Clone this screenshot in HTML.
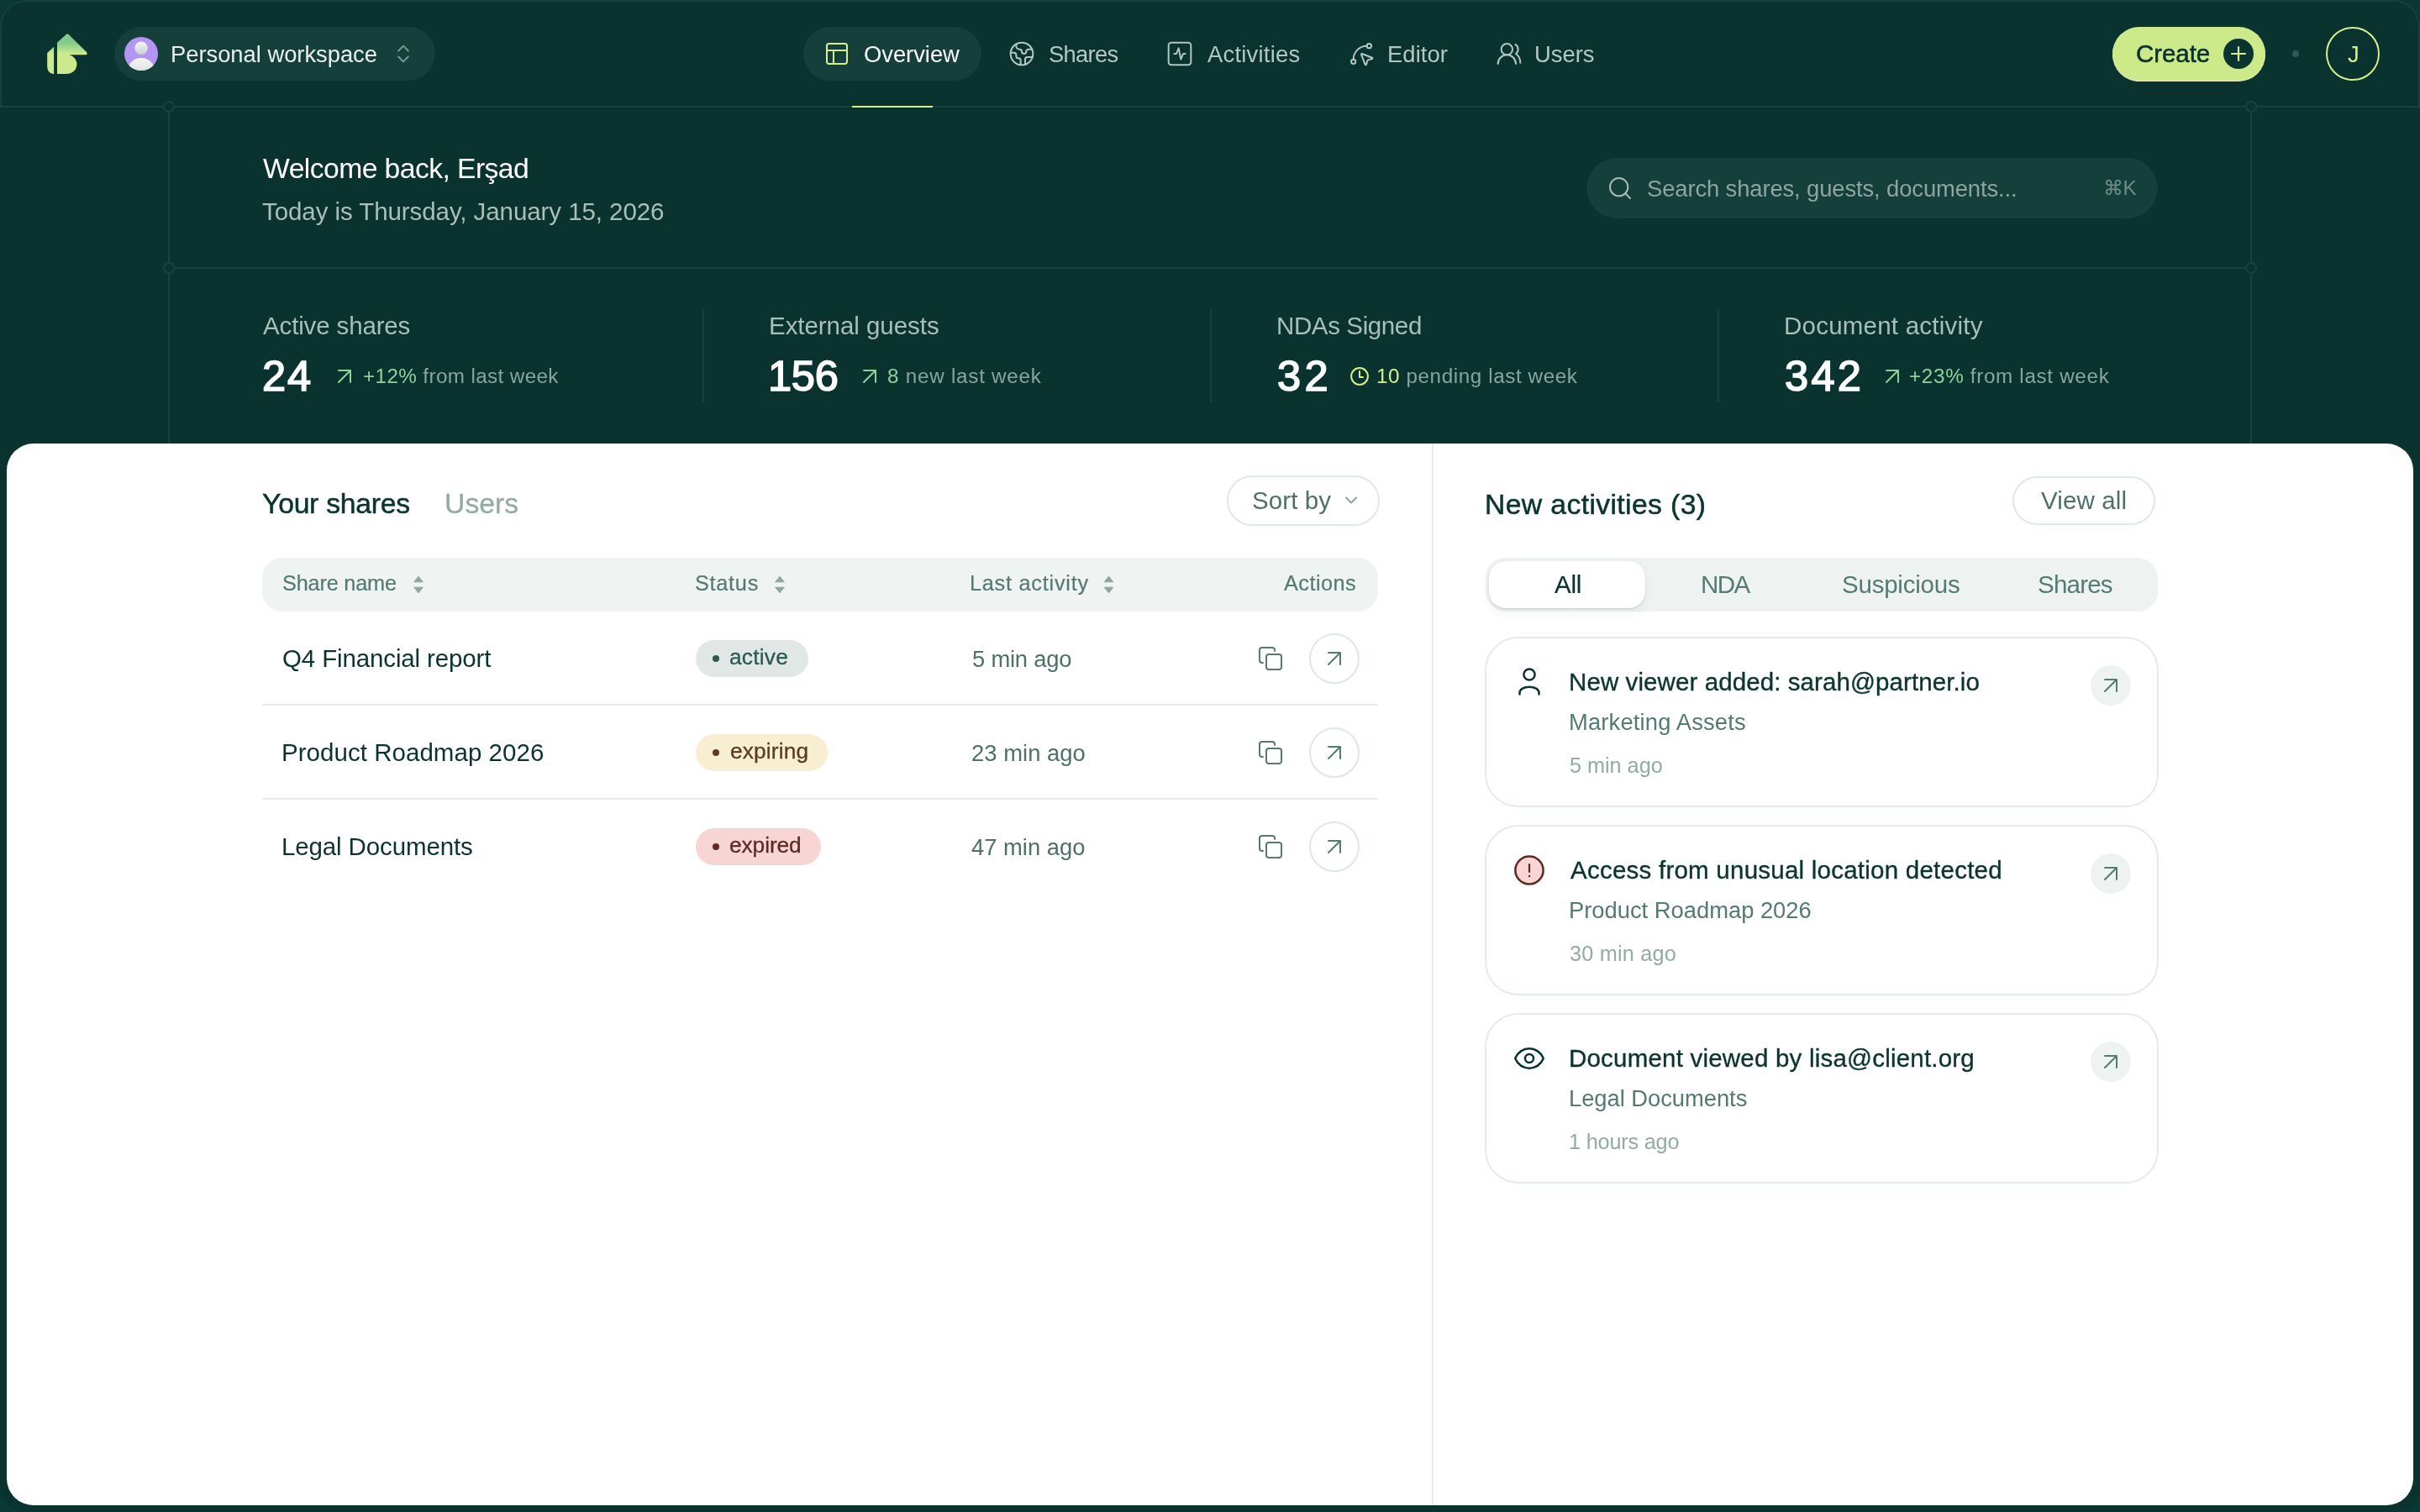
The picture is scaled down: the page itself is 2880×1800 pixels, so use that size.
<!DOCTYPE html>
<html>
<head>
<meta charset="utf-8">
<style>
html,body{margin:0;padding:0;}
body{width:2880px;height:1800px;overflow:hidden;position:relative;background:#0c3834;font-family:"Liberation Sans",sans-serif;}
.a{position:absolute;box-sizing:border-box;}
.t{position:absolute;white-space:nowrap;font-family:"Liberation Sans",sans-serif;will-change:transform;}
svg{position:absolute;overflow:visible;}
@media (max-width:2000px){html{zoom:0.5;}}
</style>
</head>
<body>
<!-- frame -->
<div class="a" style="left:0;top:0;width:2880px;height:1800px;border-radius:32px;background:#0a332f;"></div>
<div class="a" style="left:0;top:0;width:2880px;height:128px;border-radius:32px 32px 0 0;border:2px solid #15423d;border-bottom:none;"></div>

<!-- grid lines -->
<div class="a" style="left:0;top:126px;width:2880px;height:2px;background:#16433e;"></div>
<div class="a" style="left:200px;top:127px;width:2px;height:401px;background:#16433e;"></div>
<div class="a" style="left:2678px;top:127px;width:2px;height:401px;background:#16433e;"></div>
<div class="a" style="left:201px;top:318px;width:2478px;height:2px;background:#16433e;"></div>
<svg style="left:0;top:0" width="2880" height="400">
  <g fill="#0a3330" stroke="#16433e" stroke-width="2">
    <circle cx="201" cy="127" r="6.1"/><circle cx="2679" cy="127" r="6.1"/>
    <circle cx="201" cy="319" r="6.1"/><circle cx="2679" cy="319" r="6.1"/>
  </g>
</svg>

<!-- logo -->
<svg style="left:0;top:0" width="120" height="100">
  <defs>
    <linearGradient id="lg" x1="0" y1="40" x2="0" y2="64" gradientUnits="userSpaceOnUse">
      <stop offset="0" stop-color="#7ec98b"/><stop offset="0.45" stop-color="#84cb8b"/><stop offset="1" stop-color="#cde98e"/>
    </linearGradient>
  </defs>
  <path fill="url(#lg)" d="M56.2 63 L64.1 55.8 L64.1 88 L63.5 88 A7.5 8.5 0 0 1 56.2 79.6 Z"/>
  <path fill="url(#lg)" d="M68 88 L68 50.7 L79 40.8 Q80.2 39.8 81.4 40.8 L103 62 Q104.5 64.2 102.5 65.3 L82.6 65.3 A11.5 11.5 0 0 1 80 88 Z"/>
</svg>

<!-- workspace pill -->
<div class="a" style="left:136px;top:32px;width:382px;height:64px;border-radius:32px;background:#143f3b;"></div>
<svg style="left:148px;top:44px" width="40" height="40" viewBox="0 0 40 40">
  <defs>
    <clipPath id="avc"><circle cx="20" cy="20" r="20"/></clipPath>
    <linearGradient id="avg" x1="0" y1="0" x2="0" y2="1"><stop offset="0" stop-color="#f4f5f4"/><stop offset="1" stop-color="#c9d3cf"/></linearGradient>
  </defs>
  <circle cx="20" cy="20" r="20" fill="#b396f1"/>
  <g clip-path="url(#avc)">
    <circle cx="20" cy="13.3" r="7.8" fill="url(#avg)"/>
    <ellipse cx="20" cy="40" rx="16" ry="15" fill="url(#avg)"/>
  </g>
</svg>
<svg style="left:466px;top:50px" width="28" height="28" viewBox="0 0 24 24" fill="none" stroke="#7d9c95" stroke-width="1.6" stroke-linecap="round" stroke-linejoin="round">
  <path d="m7 15 5 5 5-5"/><path d="m7 9 5-5 5 5"/>
</svg>

<!-- nav -->
<div class="a" style="left:956px;top:32px;width:212px;height:64px;border-radius:32px;background:#143f3b;"></div>
<div class="a" style="left:1014px;top:126px;width:96px;height:2px;background:#d8f08a;"></div>
<svg style="left:980px;top:48px" width="32" height="32" viewBox="0 0 24 24" fill="none" stroke="#d8f08a" stroke-width="1.5" stroke-linecap="round" stroke-linejoin="round">
  <rect width="18" height="18" x="3" y="3" rx="2"/><path d="M3 9h18"/><path d="M9 21V9"/>
</svg>
<svg style="left:1200px;top:48px" width="32" height="32" viewBox="0 0 24 24" fill="none" stroke="#b3c7c1" stroke-width="1.5" stroke-linecap="round" stroke-linejoin="round">
  <path d="M21.54 15H17a2 2 0 0 0-2 2v4.54"/><path d="M7 3.34V5a3 3 0 0 0 3 3a2 2 0 0 1 2 2c0 1.1.9 2 2 2a2 2 0 0 0 2-2c0-1.1.9-2 2-2h3.17"/><path d="M11 21.95V18a2 2 0 0 0-2-2a2 2 0 0 1-2-2v-1a2 2 0 0 0-2-2H2.05"/><circle cx="12" cy="12" r="10"/>
</svg>
<svg style="left:1388px;top:48px" width="32" height="32" viewBox="0 0 24 24" fill="none" stroke="#b3c7c1" stroke-width="1.5" stroke-linecap="round" stroke-linejoin="round">
  <rect width="20" height="20" x="2" y="2" rx="2.5"/><path d="M17 12h-2l-2 5-2-10-2 5H7"/>
</svg>
<svg style="left:1604px;top:48px" width="32" height="32" viewBox="0 0 24 24" fill="none" stroke="#b3c7c1" stroke-width="1.5" stroke-linecap="round" stroke-linejoin="round">
  <path d="M12.034 12.681a.498.498 0 0 1 .647-.647l9 3.5a.5.5 0 0 1-.033.943l-3.444 1.068a1 1 0 0 0-.66.66l-1.067 3.443a.5.5 0 0 1-.943.033z"/><path d="M5 17A12 12 0 0 1 17 5"/><circle cx="19" cy="5" r="2"/><circle cx="5" cy="19" r="2"/>
</svg>
<svg style="left:1780px;top:48px" width="32" height="32" viewBox="0 0 24 24" fill="none" stroke="#b3c7c1" stroke-width="1.5" stroke-linecap="round" stroke-linejoin="round">
  <path d="M18 21a8 8 0 0 0-16 0"/><circle cx="10" cy="8" r="5"/><path d="M22 20c0-3.37-2-6.5-4-8a5 5 0 0 0-.45-8.3"/>
</svg>

<!-- create / dot / avatar -->
<div class="a" style="left:2514px;top:32px;width:182px;height:64px;border-radius:32px;background:#cdea8b;box-shadow:0 1px 0 #efeccc;"></div>
<svg style="left:2646px;top:46px" width="36" height="36" viewBox="0 0 36 36">
  <circle cx="18" cy="18" r="18" fill="#0b3431"/>
  <path d="M9.2 18h17.6M18 9.2v17.6" stroke="#d8f08a" stroke-width="2.2" stroke-linecap="butt"/>
</svg>
<div class="a" style="left:2728px;top:60px;width:8px;height:8px;border-radius:4px;background:#2d5a53;"></div>
<div class="a" style="left:2768px;top:32px;width:64px;height:64px;border-radius:32px;border:2.5px solid #d8f08a;"></div>

<!-- search -->
<div class="a" style="left:1888px;top:188px;width:680px;height:72px;border-radius:36px;background:#143f3b;"></div>
<svg style="left:1912px;top:208px" width="32" height="32" viewBox="0 0 24 24" fill="none" stroke="#a9bdb7" stroke-width="1.5" stroke-linecap="round" stroke-linejoin="round">
  <circle cx="11" cy="11" r="8"/><path d="m21 21-4.3-4.3"/>
</svg>


<!-- stats dividers -->
<div class="a" style="left:836px;top:368px;width:2px;height:111px;background:#15423d;"></div>
<div class="a" style="left:1440px;top:368px;width:2px;height:111px;background:#15423d;"></div>
<div class="a" style="left:2044px;top:368px;width:2px;height:111px;background:#15423d;"></div>
<svg style="left:0;top:0" width="2880" height="500" fill="none" stroke-width="2" stroke-linecap="round" stroke-linejoin="round">
  <g stroke="#8fd39a">
    <path d="M403 441H417V455M403 455L417 441"/>
    <path d="M1028 441H1042V455M1028 455L1042 441"/>
    <path d="M2245 441H2259V455M2245 455L2259 441"/>
  </g>
  <g stroke="#d8f08a">
    <circle cx="1618" cy="448" r="9.9"/>
    <path d="M1618 442V449H1622"/>
  </g>
</svg>

<!-- white panel -->
<div class="a" style="left:8px;top:528px;width:2864px;height:1264px;border-radius:32px;background:#ffffff;"></div>
<div class="a" style="left:1704px;top:528px;width:2px;height:1264px;background:#e3efea;"></div>

<!-- sort by -->
<div class="a" style="left:1460px;top:566px;width:182px;height:60px;border-radius:30px;border:2px solid #dfe9e5;"></div>
<svg style="left:0;top:0" width="2880" height="1100" fill="none" stroke-linecap="round" stroke-linejoin="round">
  <path d="M1602 592.5L1608 598.5L1614 592.5" stroke="#8aa59e" stroke-width="2"/>
</svg>

<!-- table header -->
<div class="a" style="left:312px;top:664px;width:1328px;height:64px;border-radius:24px;background:#eff3f2;"></div>
<svg style="left:0;top:0" width="2880" height="1100">
  <g fill="#8ea6a2" stroke="#8ea6a2" stroke-width="1" stroke-linejoin="round">
    <path d="M492.7 692.8L498 686.2L503.3 692.8Z"/><path d="M492.7 699.2L498 705.8L503.3 699.2Z"/>
    <path d="M922.7 692.8L928 686.2L933.3 692.8Z"/><path d="M922.7 699.2L928 705.8L933.3 699.2Z"/>
    <path d="M1314.2 692.8L1319.5 686.2L1324.8 692.8Z"/><path d="M1314.2 699.2L1319.5 705.8L1324.8 699.2Z"/>
  </g>
</svg>
<div class="a" style="left:312px;top:838px;width:1328px;height:2px;background:#e6eeeb;"></div>
<div class="a" style="left:312px;top:950px;width:1328px;height:2px;background:#e6eeeb;"></div>

<!-- badges -->
<div class="a" style="left:828px;top:762px;width:134px;height:44px;border-radius:22px;background:#e0e7e5;"></div>
<div class="a" style="left:848px;top:780px;width:8px;height:8px;border-radius:4px;background:#2a5a50;"></div>
<div class="a" style="left:828px;top:874px;width:157px;height:44px;border-radius:22px;background:#f8efd3;"></div>
<div class="a" style="left:848px;top:892px;width:8px;height:8px;border-radius:4px;background:#5a3a22;"></div>
<div class="a" style="left:828px;top:986px;width:149px;height:44px;border-radius:22px;background:#f7d5d5;"></div>
<div class="a" style="left:848px;top:1004px;width:8px;height:8px;border-radius:4px;background:#5c2a22;"></div>

<!-- row actions -->
<svg style="left:0;top:0" width="2880" height="1100" fill="none" stroke="#557a72" stroke-width="2" stroke-linecap="round" stroke-linejoin="round">
  <g id="act1">
    <rect x="1507" y="779" width="18" height="18" rx="3"/>
    <path d="M1503 789H1502Q1499 789 1499 786V774Q1499 771 1502 771H1514Q1517 771 1517 774V775"/>
    <path d="M1581 777H1595V791M1581 791L1595 777"/>
  </g>
  <use href="#act1" y="112"/>
  <use href="#act1" y="224"/>
  <g stroke="#dde9e4">
    <circle cx="1588" cy="784" r="29"/><circle cx="1588" cy="896" r="29"/><circle cx="1588" cy="1008" r="29"/>
  </g>
</svg>

<!-- activities -->
<div class="a" style="left:2395px;top:567px;width:170px;height:58px;border-radius:29px;border:2px solid #dfe9e5;"></div>
<div class="a" style="left:1768px;top:664px;width:800px;height:64px;border-radius:24px;background:#eef3f1;"></div>
<div class="a" style="left:1772px;top:668px;width:186px;height:56px;border-radius:20px;background:#ffffff;box-shadow:0 4px 12px rgba(10,51,48,0.08),0 1px 1.5px rgba(10,51,48,0.12);"></div>

<div class="a" style="left:1767px;top:758px;width:1802px;height:203px;border-radius:40px;border:2px solid #e3ece8;width:802px;"></div>
<div class="a" style="left:1767px;top:982px;height:203px;border-radius:40px;border:2px solid #e3ece8;width:802px;"></div>
<div class="a" style="left:1767px;top:1206px;height:203px;border-radius:40px;border:2px solid #e3ece8;width:802px;"></div>

<svg style="left:0;top:0" width="2880" height="1500" fill="none" stroke-linecap="round" stroke-linejoin="round">
  <g fill="#eef3f2"><circle cx="2512" cy="816" r="24"/><circle cx="2512" cy="1040" r="24"/><circle cx="2512" cy="1264" r="24"/></g>
  <g stroke="#557a72" stroke-width="2">
    <path d="M2505 809H2519V823M2505 823L2519 809"/>
    <path d="M2505 1033H2519V1047M2505 1047L2519 1033"/>
    <path d="M2505 1257H2519V1271M2505 1271L2519 1257"/>
  </g>
  <!-- user icon -->
  <g stroke="#0b3430" stroke-width="2.5">
    <circle cx="1820" cy="803" r="6.6"/>
    <path d="M1808.5 826.5V824.5A11.5 6.8 0 0 1 1831.5 824.5V826.5"/>
  </g>
  <!-- alert -->
  <circle cx="1820" cy="1036" r="16.6" fill="#f8d5d5" stroke="#5c2a1e" stroke-width="2.5"/>
  <path d="M1820 1029V1038" stroke="#5c2a1e" stroke-width="2.2"/>
  <circle cx="1820" cy="1043" r="1.2" fill="#5c2a1e"/>
  <!-- eye -->
  <g stroke="#0b3430" stroke-width="2.5" transform="translate(1800 1240) scale(1.6667)">
    <path d="M2.062 12.348a1 1 0 0 1 0-.696 10.75 10.75 0 0 1 19.876 0 1 1 0 0 1 0 .696 10.75 10.75 0 0 1-19.876 0" stroke-width="1.5"/>
    <circle cx="12" cy="12" r="3" stroke-width="1.5"/>
  </g>
</svg>

<div class=t style="left:203.20px;top:51.02px;font-size:27.39px;line-height:27.39px;color:#e8efec;letter-spacing:-0.029px;">Personal workspace</div>
<div class=t style="left:1027.80px;top:51.12px;font-size:27.39px;line-height:27.39px;color:#ffffff;letter-spacing:-0.029px;">Overview</div>
<div class=t style="left:1248.00px;top:51.12px;font-size:27.39px;line-height:27.39px;color:#b3c7c1;letter-spacing:-0.700px;">Shares</div>
<div class=t style="left:1437.00px;top:51.12px;font-size:27.39px;line-height:27.39px;color:#b3c7c1;letter-spacing:0.244px;">Activities</div>
<div class=t style="left:1650.80px;top:51.12px;font-size:27.39px;line-height:27.39px;color:#b3c7c1;letter-spacing:0.080px;">Editor</div>
<div class=t style="left:1826.40px;top:51.12px;font-size:27.39px;line-height:27.39px;color:#b3c7c1;letter-spacing:0.000px;">Users</div>
<div class=t style="left:2542.30px;top:48.52px;font-size:29.5px;line-height:29.5px;color:#0a312e;letter-spacing:-0.060px;-webkit-text-stroke-width:0.55px;">Create</div>
<div class=t style="left:2794.00px;top:51.12px;font-size:27.39px;line-height:27.39px;color:#d8f08a;letter-spacing:0.000px;">J</div>
<div class=t style="left:312.90px;top:183.64px;font-size:33.72px;line-height:33.72px;color:#ffffff;letter-spacing:-0.589px;">Welcome back, Erşad</div>
<div class=t style="left:312.00px;top:236.82px;font-size:29.5px;line-height:29.5px;color:#a9bfb8;letter-spacing:-0.076px;">Today is Thursday, January 15, 2026</div>
<div class=t style="left:1959.70px;top:210.62px;font-size:27.39px;line-height:27.39px;color:#8ea59e;letter-spacing:-0.109px;">Search shares, guests, documents...</div>
<div class=t style="left:2503.30px;top:211.60px;font-size:24.23px;line-height:24.23px;color:#6f8c85;letter-spacing:-0.600px;">&#8984;K</div>
<div class=t style="left:313.00px;top:372.62px;font-size:29.5px;line-height:29.5px;color:#a9bfb8;letter-spacing:-0.142px;">Active shares</div>
<div class=t style="left:312.00px;top:423.02px;font-size:50.57px;line-height:50.57px;color:#ffffff;letter-spacing:1.900px;-webkit-text-stroke-width:1.6px;">24</div>
<div class=t style="left:432.00px;top:435.90px;font-size:24.23px;line-height:24.23px;color:#8aa59e;letter-spacing:0.389px;"><span style='color:#8fd39a'>+12%</span> from last week</div>
<div class=t style="left:915.00px;top:372.62px;font-size:29.5px;line-height:29.5px;color:#a9bfb8;letter-spacing:-0.050px;">External guests</div>
<div class=t style="left:914.00px;top:423.02px;font-size:50.57px;line-height:50.57px;color:#ffffff;letter-spacing:-0.250px;-webkit-text-stroke-width:1.6px;">156</div>
<div class=t style="left:1055.70px;top:435.90px;font-size:24.23px;line-height:24.23px;color:#8aa59e;letter-spacing:0.757px;"><span style='color:#8fd39a'>8</span> new last week</div>
<div class=t style="left:1518.60px;top:372.62px;font-size:29.5px;line-height:29.5px;color:#a9bfb8;letter-spacing:-0.380px;">NDAs Signed</div>
<div class=t style="left:1519.60px;top:423.02px;font-size:50.57px;line-height:50.57px;color:#ffffff;letter-spacing:4.400px;-webkit-text-stroke-width:1.6px;">32</div>
<div class=t style="left:1637.80px;top:435.90px;font-size:24.23px;line-height:24.23px;color:#8aa59e;letter-spacing:0.600px;"><span style='color:#d8f08a'>10</span> pending last week</div>
<div class=t style="left:2123.00px;top:372.62px;font-size:29.5px;line-height:29.5px;color:#a9bfb8;letter-spacing:0.231px;">Document activity</div>
<div class=t style="left:2124.00px;top:423.02px;font-size:50.57px;line-height:50.57px;color:#ffffff;letter-spacing:3.300px;-webkit-text-stroke-width:1.6px;">342</div>
<div class=t style="left:2271.70px;top:435.90px;font-size:24.23px;line-height:24.23px;color:#8aa59e;letter-spacing:0.683px;"><span style='color:#8fd39a'>+23%</span> from last week</div>
<div class=t style="left:312.20px;top:583.44px;font-size:33.72px;line-height:33.72px;color:#0b3430;letter-spacing:-0.260px;-webkit-text-stroke-width:0.5px;">Your shares</div>
<div class=t style="left:529.40px;top:583.44px;font-size:33.72px;line-height:33.72px;color:#93aba5;letter-spacing:0.025px;-webkit-text-stroke-width:0.3px;">Users</div>
<div class=t style="left:1490.40px;top:581.02px;font-size:29.5px;line-height:29.5px;color:#4f7068;letter-spacing:0.100px;">Sort by</div>
<div class=t style="left:335.70px;top:682.40px;font-size:25.29px;line-height:25.29px;color:#557a72;letter-spacing:-0.189px;-webkit-text-stroke-width:0.2px;">Share name</div>
<div class=t style="left:827.00px;top:682.40px;font-size:25.29px;line-height:25.29px;color:#557a72;letter-spacing:0.720px;-webkit-text-stroke-width:0.2px;">Status</div>
<div class=t style="left:1154.00px;top:682.40px;font-size:25.29px;line-height:25.29px;color:#557a72;letter-spacing:0.750px;-webkit-text-stroke-width:0.2px;">Last activity</div>
<div class=t style="left:1528.20px;top:682.40px;font-size:25.29px;line-height:25.29px;color:#557a72;letter-spacing:0.467px;-webkit-text-stroke-width:0.2px;">Actions</div>
<div class=t style="left:336.40px;top:769.22px;font-size:29.5px;line-height:29.5px;color:#0b3430;letter-spacing:-0.133px;">Q4 Financial report</div>
<div class=t style="left:334.50px;top:880.92px;font-size:29.5px;line-height:29.5px;color:#0b3430;letter-spacing:0.037px;">Product Roadmap 2026</div>
<div class=t style="left:334.50px;top:993.22px;font-size:29.5px;line-height:29.5px;color:#0b3430;letter-spacing:-0.129px;">Legal Documents</div>
<div class=t style="left:868.00px;top:769.31px;font-size:26.34px;line-height:26.34px;color:#2a5a50;letter-spacing:0.220px;-webkit-text-stroke-width:0.3px;">active</div>
<div class=t style="left:868.60px;top:881.21px;font-size:26.34px;line-height:26.34px;color:#5a3a22;letter-spacing:0.129px;-webkit-text-stroke-width:0.3px;">expiring</div>
<div class=t style="left:867.80px;top:993.21px;font-size:26.34px;line-height:26.34px;color:#5c2a22;letter-spacing:-0.100px;-webkit-text-stroke-width:0.3px;">expired</div>
<div class=t style="left:1156.80px;top:770.82px;font-size:27.39px;line-height:27.39px;color:#4f7068;letter-spacing:-0.213px;">5 min ago</div>
<div class=t style="left:1155.80px;top:882.72px;font-size:27.39px;line-height:27.39px;color:#4f7068;letter-spacing:0.044px;">23 min ago</div>
<div class=t style="left:1155.80px;top:994.72px;font-size:27.39px;line-height:27.39px;color:#4f7068;letter-spacing:0.000px;">47 min ago</div>
<div class=t style="left:1767.10px;top:583.84px;font-size:33.72px;line-height:33.72px;color:#0b3430;letter-spacing:0.371px;-webkit-text-stroke-width:0.5px;">New activities (3)</div>
<div class=t style="left:2429.30px;top:581.32px;font-size:29.5px;line-height:29.5px;color:#4f7068;letter-spacing:0.129px;">View all</div>
<div class=t style="left:1849.80px;top:680.62px;font-size:29.5px;line-height:29.5px;color:#0b3430;letter-spacing:-0.250px;-webkit-text-stroke-width:0.2px;">All</div>
<div class=t style="left:2024.00px;top:680.62px;font-size:29.5px;line-height:29.5px;color:#557a72;letter-spacing:-1.500px;">NDA</div>
<div class=t style="left:2192.00px;top:680.62px;font-size:29.5px;line-height:29.5px;color:#557a72;letter-spacing:-0.222px;">Suspicious</div>
<div class=t style="left:2424.90px;top:680.62px;font-size:29.5px;line-height:29.5px;color:#557a72;letter-spacing:-0.780px;">Shares</div>
<div class=t style="left:1867.20px;top:796.92px;font-size:29.5px;line-height:29.5px;color:#0b3430;letter-spacing:0.091px;-webkit-text-stroke-width:0.35px;">New viewer added: sarah@partner.io</div>
<div class=t style="left:1867.20px;top:846.32px;font-size:27.39px;line-height:27.39px;color:#557a72;letter-spacing:0.147px;">Marketing Assets</div>
<div class=t style="left:1868.20px;top:898.50px;font-size:25.29px;line-height:25.29px;color:#93aba5;letter-spacing:-0.037px;">5 min ago</div>
<div class=t style="left:1869.20px;top:1020.92px;font-size:29.5px;line-height:29.5px;color:#0b3430;letter-spacing:0.239px;-webkit-text-stroke-width:0.35px;">Access from unusual location detected</div>
<div class=t style="left:1867.20px;top:1070.32px;font-size:27.39px;line-height:27.39px;color:#557a72;letter-spacing:-0.021px;">Product Roadmap 2026</div>
<div class=t style="left:1868.20px;top:1122.50px;font-size:25.29px;line-height:25.29px;color:#93aba5;letter-spacing:0.178px;">30 min ago</div>
<div class=t style="left:1867.20px;top:1244.92px;font-size:29.5px;line-height:29.5px;color:#0b3430;letter-spacing:0.206px;-webkit-text-stroke-width:0.35px;">Document viewed by lisa@client.org</div>
<div class=t style="left:1867.20px;top:1294.32px;font-size:27.39px;line-height:27.39px;color:#557a72;letter-spacing:-0.050px;">Legal Documents</div>
<div class=t style="left:1867.20px;top:1346.50px;font-size:25.29px;line-height:25.29px;color:#93aba5;letter-spacing:-0.200px;">1 hours ago</div>
</body>
</html>
